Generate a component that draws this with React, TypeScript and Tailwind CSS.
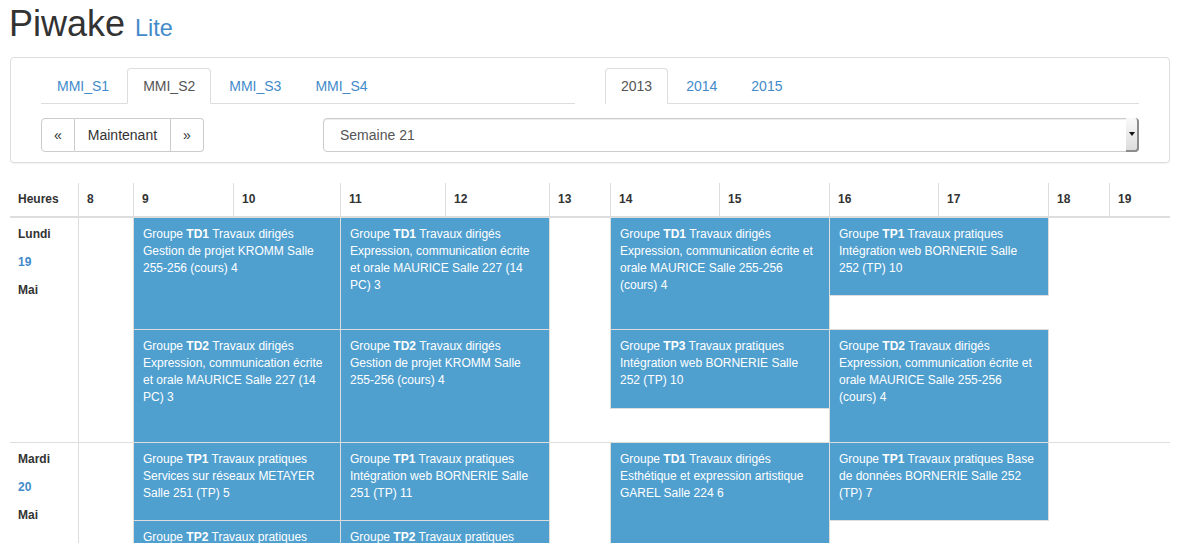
import React from 'react';

type Ev = {
  group: string;
  kind: string;
  rest: string;
  start: 9 | 11 | 14 | 16;
  row: 1 | 2;
  span?: boolean;
  h?: string;
};

const colStart: Record<number, string> = {
  9: 'col-start-2',
  11: 'col-start-4',
  14: 'col-start-7',
  16: 'col-start-9',
};

const hourCols =
  'grid-cols-[54px_100px_107px_105px_104px_61px_109px_110px_109px_110px_61px_61px]';

const days: { name: string; num: string; month: string; rows: string; events: Ev[] }[] = [
  {
    name: 'Lundi',
    num: '19',
    month: 'Mai',
    rows: 'grid-rows-[111px_113px]',
    events: [
      { group: 'TD1', kind: 'Travaux dirigés', rest: 'Gestion de projet KROMM Salle 255-256 (cours) 4', start: 9, row: 1 },
      { group: 'TD1', kind: 'Travaux dirigés', rest: 'Expression, communication écrite et orale MAURICE Salle 227 (14 PC) 3', start: 11, row: 1 },
      { group: 'TD1', kind: 'Travaux dirigés', rest: 'Expression, communication écrite et orale MAURICE Salle 255-256 (cours) 4', start: 14, row: 1 },
      { group: 'TP1', kind: 'Travaux pratiques', rest: 'Intégration web BORNERIE Salle 252 (TP) 10', start: 16, row: 1, h: 'self-start h-[79px]' },
      { group: 'TD2', kind: 'Travaux dirigés', rest: 'Expression, communication écrite et orale MAURICE Salle 227 (14 PC) 3', start: 9, row: 2 },
      { group: 'TD2', kind: 'Travaux dirigés', rest: 'Gestion de projet KROMM Salle 255-256 (cours) 4', start: 11, row: 2 },
      { group: 'TP3', kind: 'Travaux pratiques', rest: 'Intégration web BORNERIE Salle 252 (TP) 10', start: 14, row: 2, h: 'self-start h-[80px]' },
      { group: 'TD2', kind: 'Travaux dirigés', rest: 'Expression, communication écrite et orale MAURICE Salle 255-256 (cours) 4', start: 16, row: 2 },
    ],
  },
  {
    name: 'Mardi',
    num: '20',
    month: 'Mai',
    rows: 'grid-rows-[77px_113px]',
    events: [
      { group: 'TP1', kind: 'Travaux pratiques', rest: 'Services sur réseaux METAYER Salle 251 (TP) 5', start: 9, row: 1 },
      { group: 'TP1', kind: 'Travaux pratiques', rest: 'Intégration web BORNERIE Salle 251 (TP) 11', start: 11, row: 1 },
      { group: 'TD1', kind: 'Travaux dirigés', rest: 'Esthétique et expression artistique GAREL Salle 224 6', start: 14, row: 1, span: true },
      { group: 'TP1', kind: 'Travaux pratiques', rest: 'Base de données BORNERIE Salle 252 (TP) 7', start: 16, row: 1 },
      { group: 'TP2', kind: 'Travaux pratiques', rest: 'Intégration web BORNERIE Salle 251 (TP) 11', start: 9, row: 2 },
      { group: 'TP2', kind: 'Travaux pratiques', rest: 'Services sur réseaux METAYER Salle 251 (TP) 5', start: 11, row: 2 },
    ],
  },
];

const Tabs = ({ items, active }: { items: string[]; active: string }) => (
  <ul className="flex border-b border-[#ddd] h-[36px]">
    {items.map((t) => (
      <li key={t} className="mr-[2px] -mb-px">
        <a
          className={
            t === active
              ? 'block px-[15px] py-[7px] leading-[20px] border border-[#ddd] border-b-white bg-white rounded-t-[4px] text-[#555]'
              : 'block px-[15px] py-[7px] leading-[20px] border border-transparent rounded-t-[4px] text-[#428bca]'
          }
        >
          {t}
        </a>
      </li>
    ))}
  </ul>
);

const Event = ({ ev }: { ev: Ev }) => (
  <div
    className={[
      'bg-[#4f9fcf] border border-[#ddd] -mr-px -mb-px pt-[8px] px-[9px] text-white text-[12px] leading-[17px]',
      colStart[ev.start],
      'col-span-2',
      ev.row === 1 ? 'row-start-1 -mt-px' : 'row-start-2',
      ev.span ? 'row-span-2' : '',
      ev.h ?? '',
    ].join(' ')}
  >
    Groupe <b>{ev.group}</b> {ev.kind} {ev.rest}
  </div>
);

const hours = ['8', '9', '10', '11', '12', '13', '14', '15', '16', '17', '18', '19'];

export default function App() {
  return (
    <div className="min-h-screen bg-white px-[10px] font-['Liberation_Sans',Arial,sans-serif] text-[14px] text-[#333]">
      <h1 className="pt-[4px] text-[36px] leading-[40px] -ml-px">
        Piwake <small className="text-[23.4px] text-[#428bca]">Lite</small>
      </h1>

      <div className="mt-[9px] w-[1160px] border border-[#ddd] rounded-[4px] bg-white shadow-[0_1px_1px_rgba(0,0,0,0.05)] px-[30px] pt-[10px] pb-[10px]">
        <div className="flex gap-[30px]">
          <div className="flex-1">
            <Tabs items={['MMI_S1', 'MMI_S2', 'MMI_S3', 'MMI_S4']} active="MMI_S2" />
          </div>
          <div className="flex-1">
            <Tabs items={['2013', '2014', '2015']} active="2013" />
          </div>
        </div>

        <div className="flex mt-[14px] items-center">
          <div className="flex h-[34px]">
            <button className="px-[12px] border border-[#ccc] rounded-l-[4px] bg-white text-[#333] leading-[20px]">«</button>
            <button className="px-[13px] border border-[#ccc] border-l-0 bg-white text-[#333] leading-[20px]">Maintenant</button>
            <button className="px-[12px] border border-[#ccc] border-l-0 rounded-r-[4px] bg-white text-[#333] leading-[20px]">»</button>
          </div>
          <div className="ml-auto relative w-[816px] h-[34px] border border-[#ccc] rounded-[4px] bg-white shadow-[inset_0_1px_1px_rgba(0,0,0,0.075)] flex items-center pl-[16px] text-[#555]">
            Semaine 21
            <div className="absolute -right-px -top-px -bottom-px w-[13px] rounded-r-[4px] border-r-2 border-b-2 border-[#8c8c8c] bg-gradient-to-b from-[#fafafa] to-[#dcdcdc] flex items-center justify-center">
              <svg width="6" height="4" viewBox="0 0 6 4">
                <path d="M0 0h6L3 4z" fill="#111" />
              </svg>
            </div>
          </div>
        </div>
      </div>

      <div className="mt-[20px] w-[1160px] text-[12px] leading-[17px]">
        <div className="grid grid-cols-[68px_55px_100px_107px_105px_104px_61px_109px_110px_109px_110px_61px_61px] border-b border-[#ddd] font-bold">
          <div className="p-[8px]">Heures</div>
          {hours.map((h) => (
            <div key={h} className="p-[8px] border-l border-[#ddd]">
              {h}
            </div>
          ))}
        </div>

        {days.map((d) => (
          <div key={d.name} className="flex border-t border-[#ddd]">
            <div className="w-[68px] shrink-0 pl-[8px] pt-[8px] flex flex-col gap-[11px] font-bold">
              <span>{d.name}</span>
              <span className="text-[#428bca]">{d.num}</span>
              <span>{d.month}</span>
            </div>
            <div className={`flex-1 border-l border-[#ddd] grid ${hourCols} ${d.rows}`}>
              {d.events.map((ev, i) => (
                <Event key={i} ev={ev} />
              ))}
            </div>
          </div>
        ))}
      </div>
    </div>
  );
}
